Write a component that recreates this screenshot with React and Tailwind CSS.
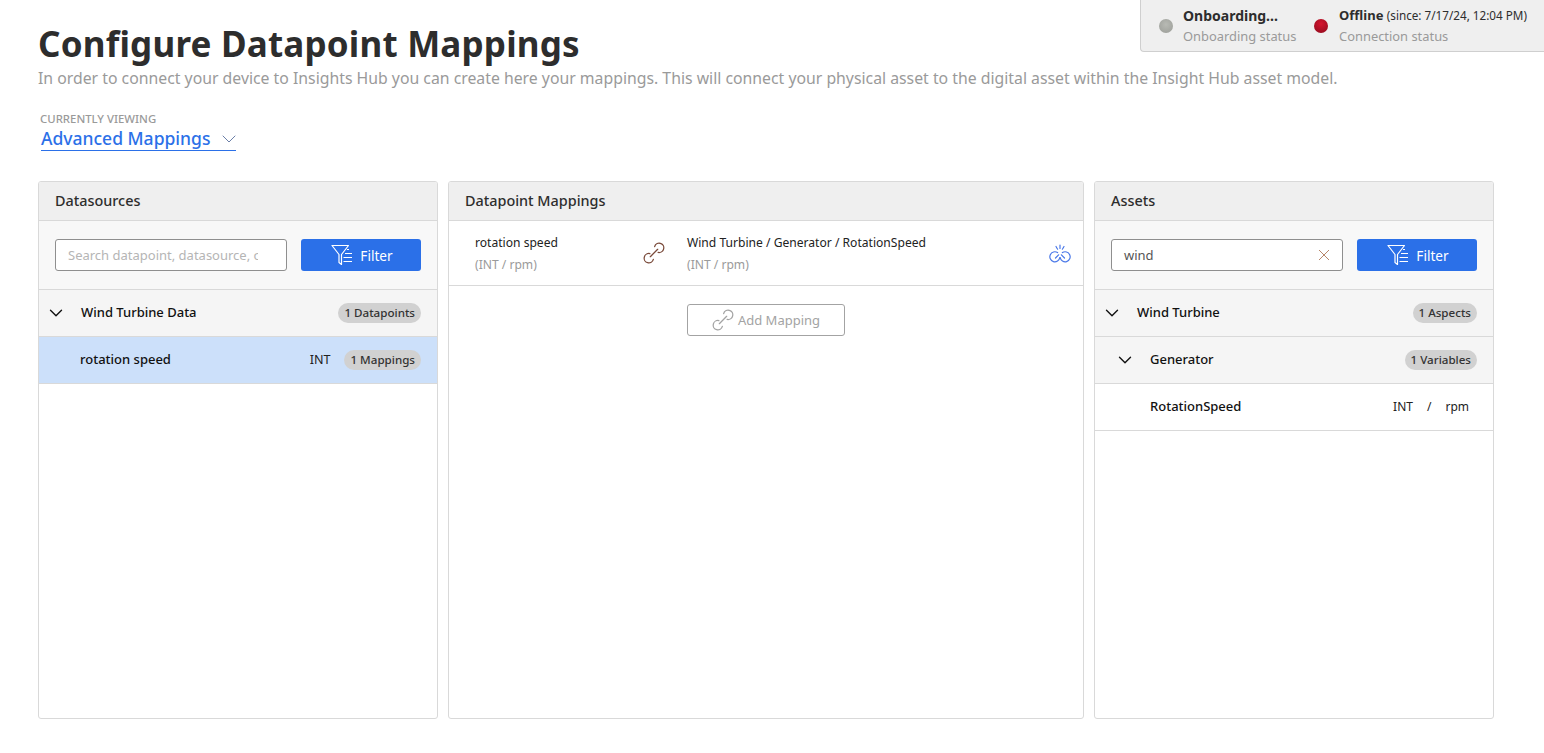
import React from 'react';
import { ChevronDown } from 'lucide-react';

const LinkIcon = ({ className }) => (
  <svg viewBox="0 0 24 24" fill="none" stroke="currentColor" strokeWidth="1.2" strokeLinecap="round" className={className}>
    <path d="M8.2 12.6 A4.3 4.3 0 1 0 11.4 17.9" />
    <path d="M15.8 11.4 A4.3 4.3 0 1 0 12.6 6.1" />
    <path d="M8.6 15.4 L15.4 8.6" />
  </svg>
);

const UnlinkIcon = ({ className }) => (
  <svg viewBox="0 0 22 22" fill="none" stroke="currentColor" strokeWidth="1.2" strokeLinecap="round" className={className}>
    <path d="M8.6 10.6 A5 5 0 1 0 10.8 15.5" />
    <path d="M13.4 10.6 A5 5 0 1 1 11.2 15.5" />
    <path d="M6.5 16 L9.6 12.8 M15.5 16 L12.4 12.8" />
    <path d="M11 3 V6.5 M7 4.5 L8.6 7.2 M15 4.5 L13.4 7.2" />
  </svg>
);

const FilterIcon = () => (
  <svg viewBox="0 0 22 22" fill="none" stroke="currentColor" strokeWidth="1.2" className="w-[22px] h-[22px]">
    <path d="M1 1.5 H17.5 L10.5 10.5 V20.5 L8 18.5 V10.5 Z" strokeLinejoin="round" />
    <path d="M16 5.5 H18 M14 9.5 H21 M12.5 13.5 H21 M12.5 17.5 H21" />
  </svg>
);

const Badge = ({ children }) => (
  <span className="h-5 px-1.5 rounded-full bg-[#d1d1d1] text-[#333] text-[11.6px] font-medium flex items-center whitespace-nowrap">{children}</span>
);

const FilterButton = () => (
  <button className="w-[120px] h-8 shrink-0 pl-[2px] rounded-[3px] bg-[#2b70e8] text-white text-[13.6px] flex items-center justify-center gap-[7px]">
    <FilterIcon />
    <span className="pt-[2px]">Filter</span>
  </button>
);

const PanelHeader = ({ title }) => (
  <div className="h-[39px] shrink-0 px-4 flex items-center bg-[#efefef] border-b border-[#d9d9d9] text-[14.4px] font-medium text-[#2d2d2d]">{title}</div>
);

const Row = ({ indent, expanded, selected, name, children }) => (
  <div className={`h-[47px] shrink-0 pr-4 flex items-center justify-between border-b border-[#d9d9d9] ${selected ? 'bg-[#cce0fa]' : expanded ? 'bg-[#f5f5f5]' : 'bg-white'}`}>
    <div className={`flex items-center text-[13px] font-medium text-[#111] ${indent}`}>
      {expanded && <ChevronDown size={22} strokeWidth={1.5} className="mr-[14px]" />}
      {name}
    </div>
    {children}
  </div>
);

const App = () => {
  return (
    <div className="relative h-[753px] overflow-hidden bg-white pl-[38px] font-['Noto_Sans',sans-serif]">
      {/* status box */}
      <div className="absolute top-0 right-0 w-[404px] h-[52px] pl-[18px] flex bg-[#efefef] border-l border-b border-[#cfcfcf] rounded-bl-[4px]">
        <div className="flex items-center w-[155px]">
          <span className="w-[14px] h-[14px] rounded-full bg-[radial-gradient(circle_at_50%_40%,#b8bab4,#9a9c97)] mr-[10px]" />
          <div>
            <div className="text-[14px] leading-5 font-bold text-[#2d2d2d]">Onboarding...</div>
            <div className="text-[12.9px] leading-5 text-[#9a9a9a]">Onboarding status</div>
          </div>
        </div>
        <div className="flex items-center">
          <span className="w-[14px] h-[14px] rounded-full bg-[radial-gradient(circle_at_50%_35%,#d5142e,#8c0a1c)] mr-[11px]" />
          <div>
            <div className="-translate-y-px text-[13px] leading-5 font-bold text-[#2d2d2d] whitespace-nowrap">Offline <span className="text-[11.7px] font-normal">(since: 7/17/24, 12:04 PM)</span></div>
            <div className="text-[12.9px] leading-5 text-[#9a9a9a]">Connection status</div>
          </div>
        </div>
      </div>

      <h1 className="pt-[23px] text-[35px] leading-[42px] font-bold text-[#2d2d2d] tracking-[0.2px]">Configure Datapoint Mappings</h1>
      <p className="mt-[3px] text-[15.8px] leading-5 text-[#9a9a9a]">In order to connect your device to Insights Hub you can create here your mappings. This will connect your physical asset to the digital asset within the Insight Hub asset model.</p>

      <div className="mt-[24px] ml-[2px] text-[11.4px] leading-[14px] font-medium text-[#9a9a9a]">CURRENTLY VIEWING</div>
      <div className="mt-[1px] ml-[3px] w-[195px] h-[24px] flex items-center justify-between border-b border-[#2b70e8] text-[#2b70e8] text-[17.5px] font-medium">
        Advanced Mappings
        <ChevronDown size={24} strokeWidth={1} className="text-[#6b7fa8] -mr-[5px]" />
      </div>

      <div className="mt-[30px] flex gap-[10px] h-[538px]">
        {/* Datasources */}
        <section className="w-[400px] flex flex-col border border-[#d9d9d9] rounded-[3px] overflow-hidden">
          <PanelHeader title="Datasources" />
          <div className="h-[69px] shrink-0 px-4 flex items-center gap-[14px] bg-[#f8f8f8] border-b border-[#d9d9d9]">
            <div className="w-[232px] h-8 px-3 flex items-center bg-white border border-[#8f8f8f] rounded-[3px] text-[13px] text-[#b5b5b5] overflow-hidden whitespace-nowrap">
              <span className="w-[190px] pt-[2px] overflow-hidden">Search datapoint, datasource, or</span>
            </div>
            <FilterButton />
          </div>
          <Row indent="pl-[6px]" expanded name="Wind Turbine Data">
            <Badge>1 Datapoints</Badge>
          </Row>
          <Row indent="pl-[41px]" selected name="rotation speed">
            <div className="flex items-center gap-[14px]">
              <span className="text-[12.6px] text-[#222]">INT</span>
              <Badge>1 Mappings</Badge>
            </div>
          </Row>
        </section>

        {/* Mappings */}
        <section className="w-[636px] flex flex-col border border-[#d9d9d9] rounded-[3px] overflow-hidden">
          <PanelHeader title="Datapoint Mappings" />
          <div className="h-[65px] shrink-0 pl-[26px] pr-3 flex items-center border-b border-[#d9d9d9]">
            <div className="w-[166px] pt-[2px] text-[12.1px] leading-[22px]">
              <div className="text-[#222]">rotation speed</div>
              <div className="text-[#9a9a9a]">(INT / rpm)</div>
            </div>
            <LinkIcon className="w-[26px] h-[26px] text-[#7a4a3a]" />
            <div className="ml-[20px] pt-[2px] flex-1 text-[12.1px] leading-[22px]">
              <div className="text-[#222]">Wind Turbine / Generator / RotationSpeed</div>
              <div className="text-[#9a9a9a]">(INT / rpm)</div>
            </div>
            <UnlinkIcon className="w-[22px] h-[22px] text-[#4a78e8]" />
          </div>
          <div className="pt-[18px] pl-[238px]">
            <button className="w-[158px] h-8 pr-[2px] flex items-center justify-center gap-[2px] bg-white border border-[#a3a3a3] rounded-[3px] text-[13px] text-[#a3a3a3]">
              <LinkIcon className="w-[26px] h-[26px]" />
              <span className="pt-[2px]">Add Mapping</span>
            </button>
          </div>
        </section>

        {/* Assets */}
        <section className="w-[400px] flex flex-col border border-[#d9d9d9] rounded-[3px] overflow-hidden">
          <PanelHeader title="Assets" />
          <div className="h-[69px] shrink-0 px-4 flex items-center gap-[14px] bg-[#f8f8f8] border-b border-[#d9d9d9]">
            <div className="w-[232px] h-8 px-3 flex items-center justify-between bg-white border border-[#8f8f8f] rounded-[3px] text-[13px] text-[#555]">
              <span className="pt-[2px]">wind</span>
              <svg viewBox="0 0 12 12" fill="none" stroke="currentColor" strokeWidth="1" className="w-3 h-3 text-[#b8866a]">
                <path d="M1 1 L11 11 M11 1 L1 11" />
              </svg>
            </div>
            <FilterButton />
          </div>
          <Row indent="pl-[6px]" expanded name="Wind Turbine">
            <Badge>1 Aspects</Badge>
          </Row>
          <Row indent="pl-[19px]" expanded name="Generator">
            <Badge>1 Variables</Badge>
          </Row>
          <Row indent="pl-[55px]" name="RotationSpeed">
            <div className="flex items-center text-xs text-[#222] pr-2 gap-[14px]">
              <span>INT</span>
              <span>/</span>
              <span>rpm</span>
            </div>
          </Row>
        </section>
      </div>
    </div>
  );
};

export default App;
